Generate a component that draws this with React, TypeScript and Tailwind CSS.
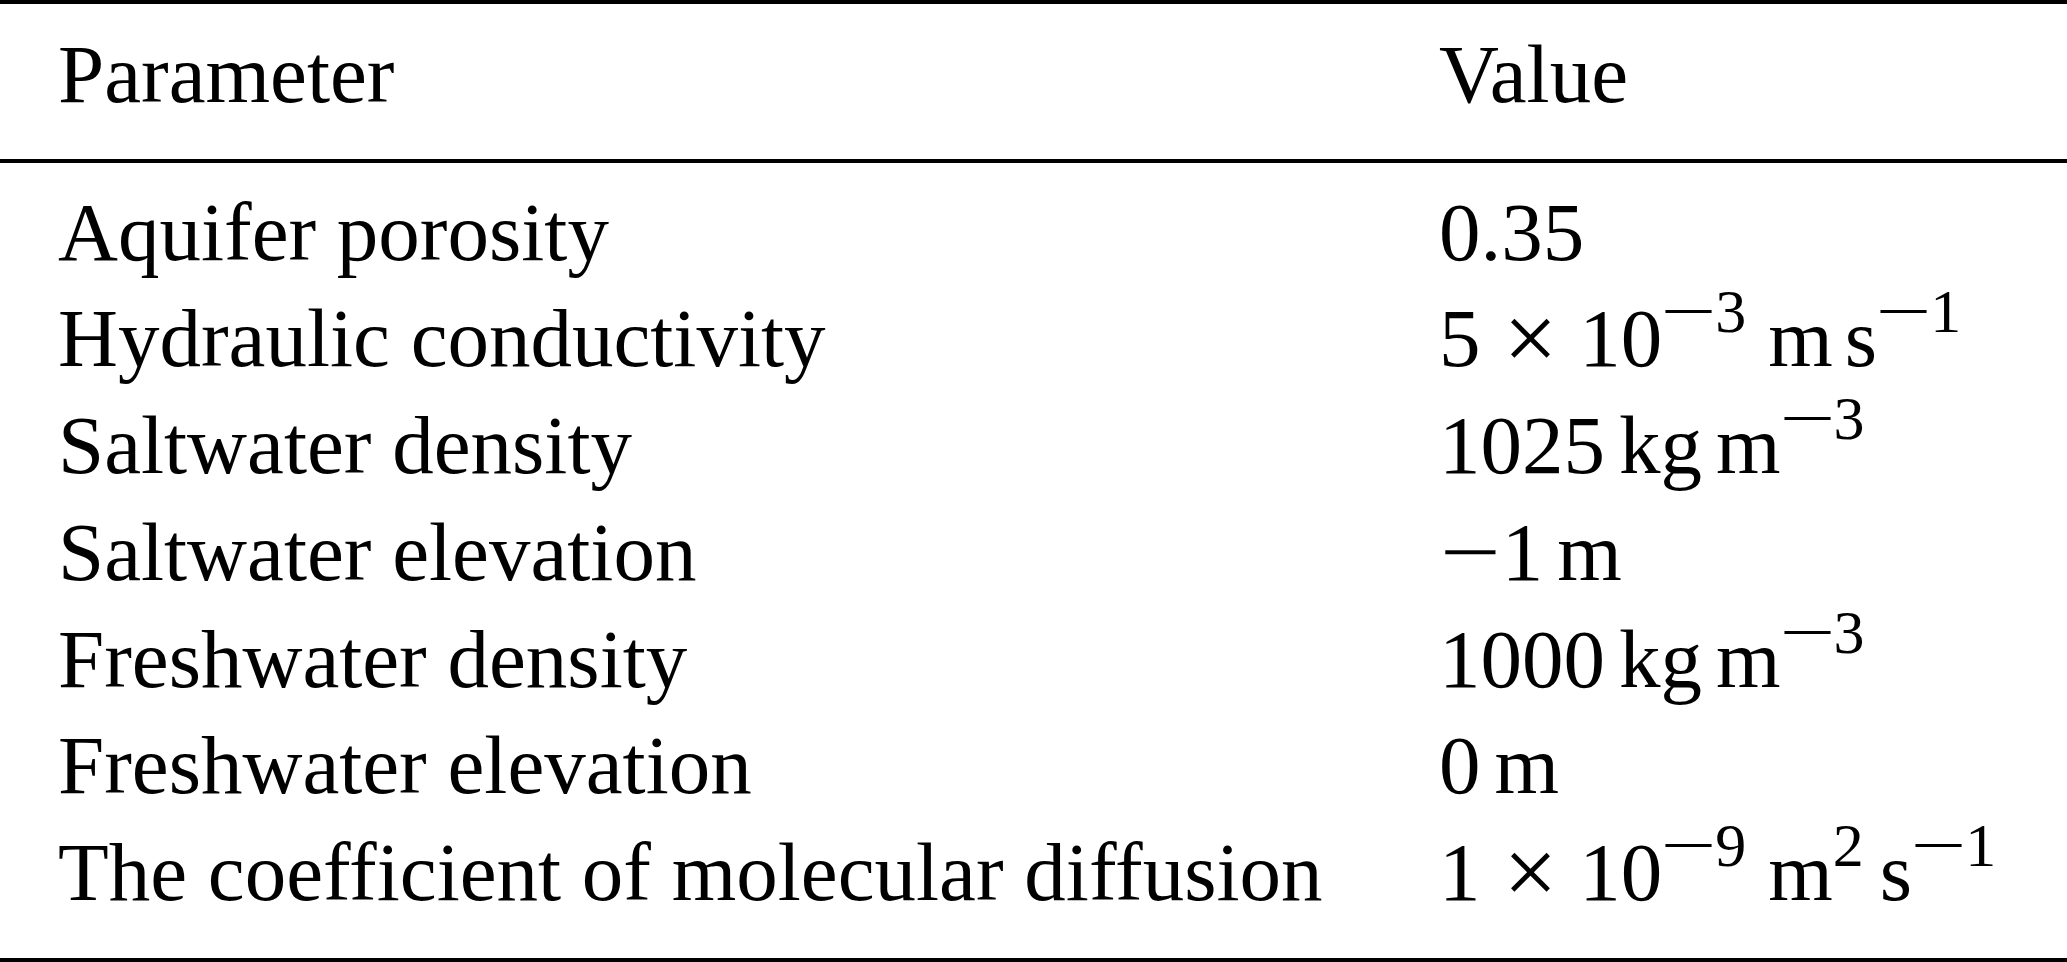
import React from "react";

const Sup = ({ children }: { children: React.ReactNode }) => (
  <span className="relative -top-[34px] text-[62px] leading-none">{children}</span>
);

const Minus = ({ small }: { small?: boolean }) =>
  small ? (
    <span className="inline-block scale-x-[1.6] mx-[9px]">−</span>
  ) : (
    <span className="inline-block scale-x-[1.3] mx-[8px]">−</span>
  );

const Times = () => <span className="mx-[26px] inline-block scale-[1.15]">×</span>;

const rows: { label: string; value: React.ReactNode }[] = [
  { label: "Aquifer porosity", value: <>0.35</> },
  {
    label: "Hydraulic conductivity",
    value: (
      <>
        5<Times />10
        <Sup>
          <Minus small />3
        </Sup>
        <span className="ml-[22px]">m</span>
        <span className="ml-[12px]">s</span>
        <Sup>
          <Minus small />1
        </Sup>
      </>
    ),
  },
  {
    label: "Saltwater density",
    value: (
      <>
        1025<span className="ml-[14px]">kg</span>
        <span className="ml-[14px]">m</span>
        <Sup>
          <Minus small />3
        </Sup>
      </>
    ),
  },
  {
    label: "Saltwater elevation",
    value: (
      <>
        <Minus />1<span className="ml-[14px]">m</span>
      </>
    ),
  },
  {
    label: "Freshwater density",
    value: (
      <>
        1000<span className="ml-[14px]">kg</span>
        <span className="ml-[14px]">m</span>
        <Sup>
          <Minus small />3
        </Sup>
      </>
    ),
  },
  {
    label: "Freshwater elevation",
    value: (
      <>
        0<span className="ml-[14px]">m</span>
      </>
    ),
  },
  {
    label: "The coefficient of molecular diffusion",
    value: (
      <>
        1<Times />10
        <Sup>
          <Minus small />9
        </Sup>
        <span className="ml-[22px]">m</span>
        <Sup>2</Sup>
        <span className="ml-[16px]">s</span>
        <Sup>
          <Minus small />1
        </Sup>
      </>
    ),
  },
];

export default function App() {
  return (
    <div className="w-[2067px] h-[962px] bg-white text-black font-['Liberation_Serif',serif] text-[83px] leading-[106.7px] flex flex-col overflow-hidden">
      <div className="h-[4px] bg-black" />
      <div className="grid grid-cols-[1439px_1fr] pt-[17px] pb-[31px]">
        <div className="pl-[58px] whitespace-nowrap">Parameter</div>
        <div className="whitespace-nowrap">Value</div>
      </div>
      <div className="h-[4px] bg-black" />
      <div className="flex flex-col pt-[16px] pb-[32px]">
        {rows.map((r) => (
          <div key={r.label} className="grid grid-cols-[1439px_1fr]">
            <div className="pl-[58px] whitespace-nowrap">{r.label}</div>
            <div className="whitespace-nowrap">{r.value}</div>
          </div>
        ))}
      </div>
      <div className="h-[4px] bg-black" />
    </div>
  );
}
